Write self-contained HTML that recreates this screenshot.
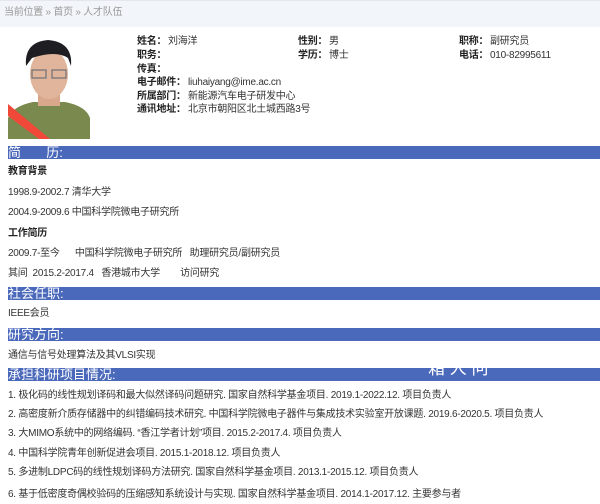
<!DOCTYPE html><html><head><meta charset="utf-8"><style>
*{margin:0;padding:0}
body{width:600px;height:504px;overflow:hidden;background:#fff;font-family:"Liberation Sans","Noto Sans CJK SC",sans-serif;color:#333;position:relative}
.a{position:absolute;white-space:nowrap;font-size:10px;line-height:12px;letter-spacing:-0.25px}
.b{font-weight:bold;color:#222}
.bar{position:absolute;left:8px;width:592px;height:13px;background:#4b69bb;color:#fff;font-size:13px;line-height:13px;overflow:hidden;white-space:nowrap}
</style></head><body>
<div style="position:absolute;left:0;top:0;width:600px;height:26px;background:#f2f5f9;border-top:1px solid #e4e8ee"></div>
<div class="a" style="left:4px;top:7px;color:#999">当前位置 » 首页 » 人才队伍</div>
<svg style="position:absolute;left:8px;top:36px" width="82" height="103" viewBox="0 0 82 103">
<rect width="82" height="103" fill="#fff"/>
<path d="M0 82 Q5 70 25 66 L57 66 Q78 70 82 82 L82 103 L0 103Z" fill="#7a8a4e"/>
<path d="M0 68 L42 103 L31 103 L0 80Z" fill="#f0493a"/>
<rect x="30" y="58" width="22" height="12" fill="#d9a78c"/>
<ellipse cx="41" cy="38" rx="19" ry="25" fill="#e0b59b"/>
<path d="M18 30 Q16 6 40 4 Q65 6 63 30 L60 22 Q48 14 24 22Z" fill="#1e1e22"/>
<rect x="24" y="34" width="14" height="8" fill="none" stroke="#777" stroke-width="1.3"/>
<rect x="44" y="34" width="14" height="8" fill="none" stroke="#777" stroke-width="1.3"/>
</svg>
<div class="a b" style="left:137px;top:36px">姓名：</div><div class="a" style="left:168px;top:36px">刘海洋</div>
<div class="a b" style="left:298px;top:36px">性别：</div><div class="a" style="left:329px;top:36px">男</div>
<div class="a b" style="left:459px;top:36px">职称：</div><div class="a" style="left:490px;top:36px">副研究员</div>
<div class="a b" style="left:137px;top:50px">职务：</div>
<div class="a b" style="left:298px;top:50px">学历：</div><div class="a" style="left:329px;top:50px">博士</div>
<div class="a b" style="left:459px;top:50px">电话：</div><div class="a" style="left:490px;top:50px">010-82995611</div>
<div class="a b" style="left:137px;top:64px">传真：</div>
<div class="a b" style="left:137px;top:77px">电子邮件：</div><div class="a" style="left:188px;top:77px">liuhaiyang@ime.ac.cn</div>
<div class="a b" style="left:137px;top:91px">所属部门：</div><div class="a" style="left:188px;top:91px">新能源汽车电子研发中心</div>
<div class="a b" style="left:137px;top:104px">通讯地址：</div><div class="a" style="left:188px;top:104px">北京市朝阳区北土城西路3号</div>
<div class="bar" style="top:146px">简&nbsp;&nbsp;&nbsp;&nbsp;&nbsp;&nbsp;&nbsp;历:</div>
<div class="a b" style="left:8px;top:166px">教育背景</div>
<div class="a" style="left:8px;top:187px">1998.9-2002.7 清华大学</div>
<div class="a" style="left:8px;top:207px">2004.9-2009.6 中国科学院微电子研究所</div>
<div class="a b" style="left:8px;top:228px">工作简历</div>
<div class="a" style="left:8px;top:248px">2009.7-至今&nbsp;&nbsp;&nbsp;&nbsp;&nbsp;&nbsp;中国科学院微电子研究所&nbsp;&nbsp;&nbsp;助理研究员/副研究员</div>
<div class="a" style="left:8px;top:268px">其间&nbsp;&nbsp;2015.2-2017.4&nbsp;&nbsp;&nbsp;香港城市大学&nbsp;&nbsp;&nbsp;&nbsp;&nbsp;&nbsp;&nbsp;&nbsp;访问研究</div>
<div class="bar" style="top:287px">社会任职:</div>
<div class="a" style="left:8px;top:308px">IEEE会员</div>
<div class="bar" style="top:328px">研究方向:</div>
<div class="a" style="left:8px;top:350px">通信与信号处理算法及其VLSI实现</div>
<div class="bar" style="top:368px">承担科研项目情况:<span style="position:absolute;left:420px;top:-6px;font-size:17px">箱 人 问</span></div>
<div class="a" style="left:8px;top:390px">1. 极化码的线性规划译码和最大似然译码问题研究. 国家自然科学基金项目. 2019.1-2022.12. 项目负责人</div>
<div class="a" style="left:8px;top:409px">2. 高密度新介质存储器中的纠错编码技术研究. 中国科学院微电子器件与集成技术实验室开放课题. 2019.6-2020.5. 项目负责人</div>
<div class="a" style="left:8px;top:428px">3. 大MIMO系统中的网络编码. “香江学者计划”项目. 2015.2-2017.4. 项目负责人</div>
<div class="a" style="left:8px;top:448px">4. 中国科学院青年创新促进会项目. 2015.1-2018.12. 项目负责人</div>
<div class="a" style="left:8px;top:467px">5. 多进制LDPC码的线性规划译码方法研究. 国家自然科学基金项目. 2013.1-2015.12. 项目负责人</div>
<div class="a" style="left:8px;top:489px">6. 基于低密度奇偶校验码的压缩感知系统设计与实现. 国家自然科学基金项目. 2014.1-2017.12. 主要参与者</div>
</body></html>
